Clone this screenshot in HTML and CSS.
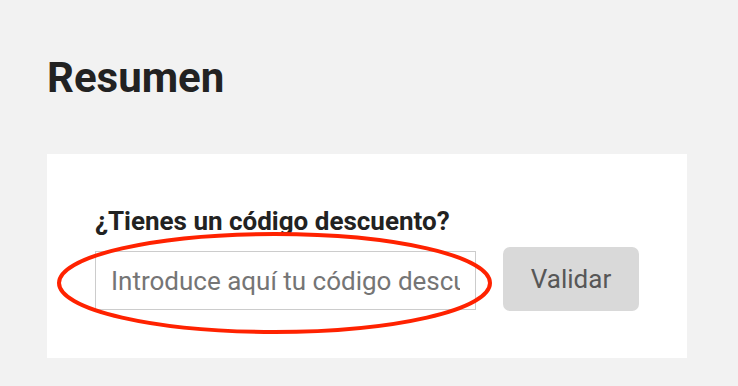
FILE: index.html
```html
<!DOCTYPE html>
<html lang="es">
<head>
<meta charset="utf-8">
<title>Resumen</title>
<link rel="stylesheet" href="styles.css">
</head>
<body>
<main class="page">
  <h1 class="title">Resumen</h1>
  <section class="card">
    <label class="label" for="code">¿Tienes un código descuento?</label>
    <div class="row">
      <input id="code" class="code-input" type="text" placeholder="Introduce aquí tu código descuento">
      <button class="validate" type="button">Validar</button>
    </div>
  </section>
  <svg class="mark" width="738" height="386" viewBox="0 0 738 386" aria-hidden="true">
    <ellipse cx="274.5" cy="283" rx="215.5" ry="49" fill="none" stroke="#ff2200" stroke-width="4"/>
  </svg>
</main>
</body>
</html>
```

FILE: styles.css
```css
html, body {
  margin: 0;
  padding: 0;
  background: #f2f2f2;
  font-family: Roboto, "Liberation Sans", sans-serif;
}

.page {
  position: relative;
  width: 738px;
  height: 386px;
  box-sizing: border-box;
  padding: 53px 51px 0 47px;
  overflow: hidden;
}

.title {
  margin: 0 0 51px 0;
  font-size: 42px;
  line-height: 50px;
  font-weight: 700;
  color: #222222;
}

.card {
  background: #ffffff;
  padding: 53px 48px 47px 48px;
}

.label {
  display: block;
  font-size: 26px;
  line-height: 28px;
  font-weight: 700;
  color: #222222;
}

.row {
  display: flex;
  align-items: flex-start;
  gap: 27px;
  margin-top: 12px;
}

.code-input {
  box-sizing: border-box;
  width: 381px;
  height: 59px;
  margin: 4px 0 0 0;
  padding: 0 15px 0 15px;
  border: 1px solid #cccccc;
  border-radius: 0;
  background: #ffffff;
  font-family: Roboto, "Liberation Sans", sans-serif;
  font-size: 26px;
  color: #333333;
  outline: none;
}

.code-input::placeholder {
  color: #757575;
  opacity: 1;
}

.validate {
  box-sizing: border-box;
  width: 136px;
  height: 64px;
  border: none;
  border-radius: 7px;
  background: #d9d9d9;
  color: #575757;
  font-family: Roboto, "Liberation Sans", sans-serif;
  font-size: 26px;
  padding: 0;
}

.mark {
  position: absolute;
  left: 0;
  top: 0;
  pointer-events: none;
}
```
